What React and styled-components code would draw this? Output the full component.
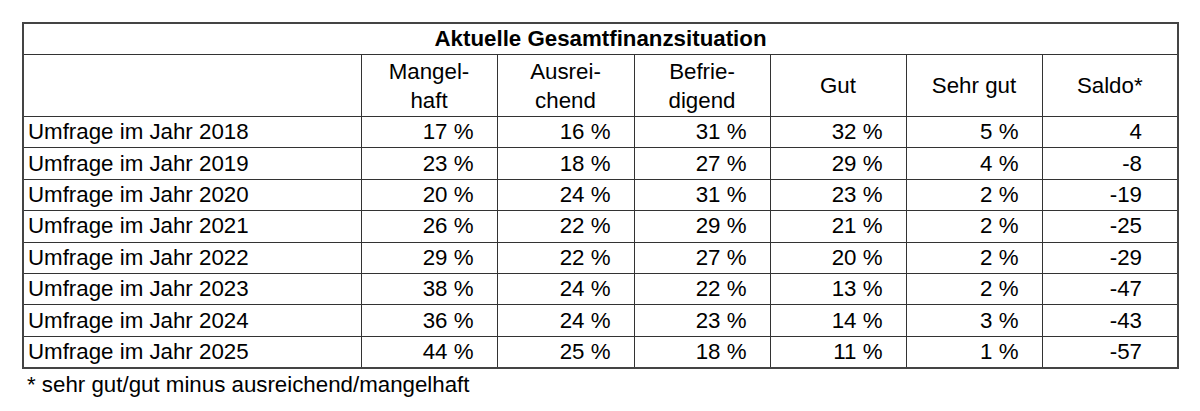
import React from "react";
import styled, { createGlobalStyle } from "styled-components";

const GlobalStyle = createGlobalStyle`
  html, body {
    margin: 0;
    padding: 0;
    background: #ffffff;
  }
  body {
    font-family: "Liberation Sans", Arial, sans-serif;
    color: #000000;
  }
`;

const Page = styled.div`
  padding: 22px 0 0 22px;
  width: 1200px;
  height: 411px;
  box-sizing: border-box;
`;

const Table = styled.table`
  width: 1156px;
  table-layout: fixed;
  border-collapse: collapse;
  border: 2px solid #444;
  font-size: 22.3px;
`;

const Col = styled.col`
  width: ${(p) => p.$w}px;
`;

const TitleCell = styled.th`
  height: 30px;
  padding: 0;
  font-weight: bold;
  text-align: center;
  border-bottom: 1px solid #333;
`;

const HeadCell = styled.th`
  height: 61px;
  padding: 0;
  font-weight: normal;
  text-align: center;
  line-height: 29px;
  border: 1px solid #333;
`;

const Row = styled.tr`
  height: 31.4px;
`;

const LabelCell = styled.td`
  padding: 0 0 0 4px;
  text-align: left;
  white-space: nowrap;
  border: 1px solid #333;
`;

const ValueCell = styled.td`
  padding: 0 ${(p) => p.$pad || 23}px 0 0;
  text-align: right;
  white-space: nowrap;
  border: 1px solid #333;
`;

const Note = styled.div`
  font-size: 22.3px;
  line-height: 31px;
  padding-left: 5px;
`;

const colWidths = [338, 136, 137, 136, 136, 136, 136];

const heads = [
  ["Mangel-", "haft"],
  ["Ausrei-", "chend"],
  ["Befrie-", "digend"],
  ["Gut"],
  ["Sehr gut"],
  ["Saldo*"],
];

const rows = [
  [2018, 17, 16, 31, 32, 5, "4"],
  [2019, 23, 18, 27, 29, 4, "-8"],
  [2020, 20, 24, 31, 23, 2, "-19"],
  [2021, 26, 22, 29, 21, 2, "-25"],
  [2022, 29, 22, 27, 20, 2, "-29"],
  [2023, 38, 24, 22, 13, 2, "-47"],
  [2024, 36, 24, 23, 14, 3, "-43"],
  [2025, 44, 25, 18, 11, 1, "-57"],
];

export default function App() {
  return (
    <>
      <GlobalStyle />
      <Page>
        <Table>
          <colgroup>
            {colWidths.map((w, i) => (
              <Col key={i} $w={w} />
            ))}
          </colgroup>
          <thead>
            <tr>
              <TitleCell colSpan={7}>Aktuelle Gesamtfinanzsituation</TitleCell>
            </tr>
            <tr>
              <HeadCell />
              {heads.map((h) => (
                <HeadCell key={h[0]}>
                  {h.map((line, i) => (
                    <React.Fragment key={line}>
                      {i > 0 && <br />}
                      {line}
                    </React.Fragment>
                  ))}
                </HeadCell>
              ))}
            </tr>
          </thead>
          <tbody>
            {rows.map(([year, ...vals]) => (
              <Row key={year}>
                <LabelCell>Umfrage im Jahr {year}</LabelCell>
                {vals.slice(0, 5).map((v, i) => (
                  <ValueCell key={i}>{v} %</ValueCell>
                ))}
                <ValueCell $pad={35}>{vals[5]}</ValueCell>
              </Row>
            ))}
          </tbody>
        </Table>
        <Note>* sehr gut/gut minus ausreichend/mangelhaft</Note>
      </Page>
    </>
  );
}
